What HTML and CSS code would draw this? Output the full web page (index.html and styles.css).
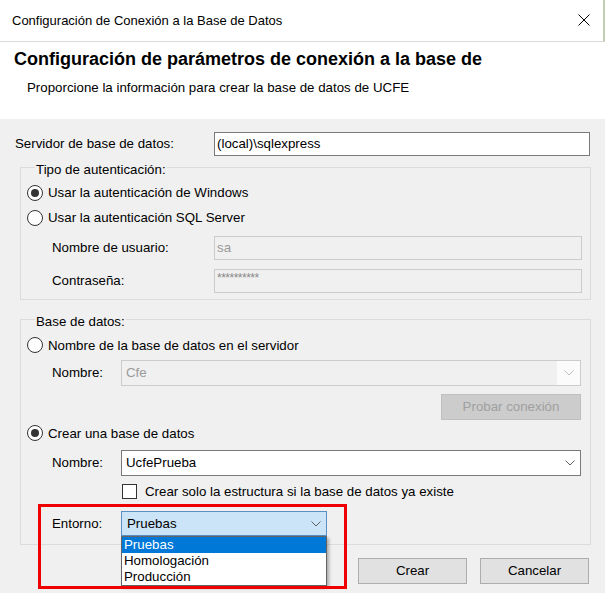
FILE: index.html
```html
<!DOCTYPE html>
<html lang="es">
<head>
<meta charset="utf-8">
<title>Configuración de Conexión a la Base de Datos</title>
<link rel="stylesheet" href="styles.css">
</head>
<body>
<div class="window">
  <div class="titlebar">
    <span class="title">Configuración de Conexión a la Base de Datos</span>
    <svg class="close" width="12" height="12" viewBox="0 0 12 12"><path d="M0.5 0.5 L11.5 11.5 M11.5 0.5 L0.5 11.5" stroke="#000" stroke-width="1" fill="none"/></svg>
  </div>
  <div class="header">
    <h1>Configuración de parámetros de conexión a la base de</h1>
    <p>Proporcione la información para crear la base de datos de UCFE</p>
  </div>
  <div class="content">
    <div class="server-row">
      <span class="label">Servidor de base de datos:</span>
      <div class="input server-input">(local)\sqlexpress</div>
    </div>

    <fieldset class="group group-auth">
      <legend>Tipo de autenticación:</legend>
      <div class="radio-row"><span class="radio checked"></span>Usar la autenticación de Windows</div>
      <div class="radio-row"><span class="radio"></span>Usar la autenticación SQL Server</div>
      <div class="field-row user-row">
        <span class="label">Nombre de usuario:</span>
        <div class="input disabled">sa</div>
      </div>
      <div class="field-row pwd-row">
        <span class="label">Contraseña:</span>
        <div class="input disabled pwd">**********</div>
      </div>
    </fieldset>

    <fieldset class="group group-db">
      <legend>Base de datos:</legend>
      <div class="radio-row db-radio"><span class="radio"></span>Nombre de la base de datos en el servidor</div>
      <div class="field-row combo-row">
        <span class="label">Nombre:</span>
        <div class="combo disabled">
          <span class="combo-text">Cfe</span>
          <span class="combo-arrow"><svg width="10" height="6" viewBox="0 0 10 6"><path d="M0.5 0.5 L5 5 L9.5 0.5" stroke="#bdbdbd" fill="none"/></svg></span>
        </div>
      </div>
      <div class="test-row"><span class="btn btn-disabled">Probar conexión</span></div>
      <div class="radio-row create-radio"><span class="radio checked"></span>Crear una base de datos</div>
      <div class="field-row combo-row2">
        <span class="label">Nombre:</span>
        <div class="combo">
          <span class="combo-text">UcfePrueba</span>
          <span class="combo-arrow"><svg width="10" height="6" viewBox="0 0 10 6"><path d="M0.5 0.5 L5 5 L9.5 0.5" stroke="#606060" fill="none"/></svg></span>
        </div>
      </div>
      <div class="check-row"><span class="checkbox"></span>Crear solo la estructura si la base de datos ya existe</div>
      <div class="field-row env-row">
        <span class="label">Entorno:</span>
        <div class="combo env-combo">
          <span class="combo-text">Pruebas</span>
          <span class="combo-arrow"><svg width="10" height="6" viewBox="0 0 10 6"><path d="M0.5 0.5 L5 5 L9.5 0.5" stroke="#606060" fill="none"/></svg></span>
          <ul class="dropdown">
            <li class="selected">Pruebas</li>
            <li>Homologación</li>
            <li>Producción</li>
          </ul>
        </div>
      </div>
    </fieldset>

    <div class="actions">
      <span class="btn">Crear</span>
      <span class="btn">Cancelar</span>
    </div>
  </div>
  <div class="highlight"></div>
</div>
</body>
</html>
```

FILE: styles.css
```css
* { box-sizing: border-box; }
html, body { margin: 0; padding: 0; }
body {
  font-family: "Liberation Sans", Arial, sans-serif;
  font-size: 13.3px;
  color: #000;
  background: #f0f0f0;
}
.window {
  position: relative;
  width: 605px;
  height: 593px;
  background: #f0f0f0;
  overflow: hidden;
}
.titlebar {
  height: 42px;
  background: #fff;
  border-bottom: 1px solid #dadada;
  border-right: 2px solid #c3cdb6;
  display: flex;
  align-items: center;
  justify-content: space-between;
  padding: 0 13px 1px 12px;
}
.title {
  font-size: 13px;
  color: #000;
}
.close { display: block; }
.header {
  height: 77px;
  background: #fff;
  padding: 7px 0 0 0;
}
.header h1 {
  margin: 0;
  padding-left: 14px;
  font-size: 18px;
  line-height: 21px;
  font-weight: bold;
}
.header p {
  margin: 10px 0 0 0;
  padding-left: 27px;
  font-size: 13.3px;
  line-height: 16px;
}
.content {
  padding: 13px 14px 0 15px;
}
.server-row {
  display: grid;
  grid-template-columns: 199px 1fr;
  align-items: center;
}
.label { line-height: 16px; white-space: nowrap; }
.input {
  height: 24px;
  border: 1px solid #7a7a7a;
  background: #fff;
  padding: 0 2px;
  line-height: 22px;
  white-space: nowrap;
}
.server-input { margin-right: 1px; }
.input.disabled {
  background: #f0f0f0;
  border-color: #cccccc;
  color: #9a9a9a;
}
.input.pwd {
  font-size: 12px;
  line-height: 16px;
  letter-spacing: -0.5px;
  color: #8a8a8a;
}
.group {
  margin: 1px 0 0 5px;
  padding: 3px 8px 6px 6px;
  border: 1px solid #dcdcdc;
  min-width: 0;
}
.group legend {
  margin-left: 8px;
  padding: 6px 1px 0 1px;
  line-height: 14px;
  height: 20px;
}
.group-db { margin-top: 9px; padding-bottom: 8px; padding-top: 4px; }
.radio-row {
  height: 25px;
  display: flex;
  align-items: center;
}
.radio {
  width: 16px;
  height: 16px;
  border: 1px solid #333;
  border-radius: 50%;
  background: #fff;
  margin-right: 5px;
  display: flex;
  align-items: center;
  justify-content: center;
  flex: none;
}
.radio.checked::after {
  content: "";
  width: 8px;
  height: 8px;
  border-radius: 50%;
  background: #333;
}
.field-row {
  display: grid;
  align-items: center;
  padding-left: 25px;
}
.group-auth .field-row { grid-template-columns: 162px 1fr; }
.user-row { margin-top: 6px; }
.pwd-row { margin-top: 9px; }
.db-radio { height: 24px; }
.group-db .field-row { grid-template-columns: 69px 1fr; }
.combo {
  position: relative;
  height: 26px;
  border: 1px solid #7a7a7a;
  background: #fff;
  display: flex;
  align-items: center;
  margin-right: 1px;
}
.combo-text { flex: 1; padding-left: 4px; line-height: 16px; }
.combo-arrow {
  width: 21px;
  height: 100%;
  display: flex;
  align-items: center;
  justify-content: center;
}
.combo.disabled {
  border-color: #cccccc;
  background: #f0f0f0;
  color: #9a9a9a;
}
.combo.disabled .combo-arrow { background: #fbfbfb; width: 23px; }
.combo-row { margin-top: 3px; }
.test-row {
  display: flex;
  justify-content: flex-end;
  margin-top: 8px;
  margin-right: 1px;
}
.btn {
  display: flex;
  align-items: center;
  justify-content: center;
  height: 26px;
  width: 109px;
  border: 1px solid #adadad;
  background: #e1e1e1;
  line-height: 16px;
}
.btn-disabled {
  width: 140px;
  background: #cccccc;
  border-color: #bfbfbf;
  color: #a0a0a0;
}
.create-radio { height: 24px; margin-top: 1px; }
.combo-row2 { margin-top: 5px; }
.check-row {
  margin-top: 7px;
  height: 16px;
  display: flex;
  align-items: center;
  padding-left: 95px;
}
.checkbox {
  width: 15px;
  height: 15px;
  border: 1px solid #333;
  background: #fff;
  margin-right: 8px;
  flex: none;
}
.env-row { margin-top: 12px; }
.env-combo {
  width: 206px;
  height: 25px;
  background: #cce4f7;
  border-color: #5b8fc4;
}
.env-combo .combo-text { padding-left: 5px; }
.dropdown {
  position: absolute;
  top: 24px;
  left: -1px;
  width: 206px;
  margin: 0;
  padding: 0;
  list-style: none;
  background: #fff;
  border: 1px solid #646464;
  box-shadow: 2px 2px 3px rgba(0, 0, 0, 0.3);
  z-index: 2;
}
.dropdown li {
  height: 16px;
  line-height: 16px;
  padding-left: 2px;
}
.dropdown li.selected {
  background: #0078d7;
  color: #fff;
}
.actions {
  display: flex;
  justify-content: flex-end;
  gap: 13px;
  margin-top: 13px;
  margin-right: 2px;
}
.highlight {
  position: absolute;
  left: 38px;
  top: 504px;
  width: 309px;
  height: 85px;
  border: 3px solid #ee0000;
  z-index: 3;
  pointer-events: none;
}
```
